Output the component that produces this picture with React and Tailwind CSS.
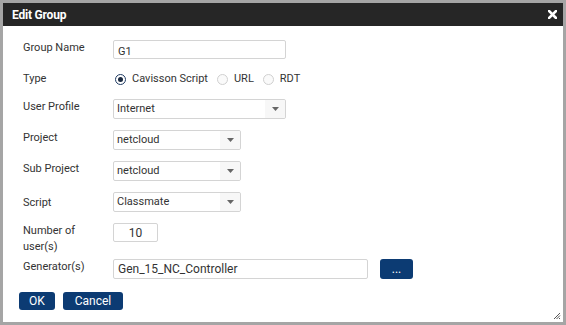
import React from 'react';

const Label = ({ children, className = '' }) => (
    <div className={`w-[90px] shrink-0 leading-[16px] ${className}`}>{children}</div>
);

const Select = ({ value, width }) => (
    <div className={`${width} h-[20px] flex items-center border border-[#d4d4d4] rounded-[2px] bg-white`}>
        <span className="flex-1 pl-[3px] leading-[18px] text-[#333]">{value}</span>
        <span className="w-[20px] h-full flex items-center justify-center bg-[#f7f7f7] rounded-r-[2px]">
            <svg width="7" height="4" viewBox="0 0 7 4">
                <path d="M0 0 H7 L3.5 4 Z" fill="#666" />
            </svg>
        </span>
    </div>
);

const Radio = ({ checked, label }) => (
    <label className="flex items-center mr-[9px]">
        <span
            className={`w-[11px] h-[11px] rounded-full border flex items-center justify-center ${
                checked ? 'border-[#1f3b63] bg-white' : 'border-[#d0d0d0] bg-[#fafafa]'
            }`}
        >
            {checked && <span className="w-[5px] h-[5px] rounded-full bg-[#1b2a40]" />}
        </span>
        <span className="ml-[6px]">{label}</span>
    </label>
);

const Button = ({ children, className = '' }) => (
    <button className={`h-[18px] bg-[#0c3b73] text-white rounded-[3px] text-[12px] leading-[18px] ${className}`}>
        {children}
    </button>
);

export default function App() {
    return (
        <div
            className="w-[566px] h-[325px] bg-[#a5a5a5] p-[3px] text-[11px] text-[#333]"
            style={{ fontFamily: 'Roboto, "Liberation Sans", sans-serif' }}
        >
            <div className="w-full h-full bg-white flex flex-col relative">
                {/* Title bar */}
                <div className="h-[23px] bg-[#262626] flex items-center justify-between pl-[9px] pr-[6px]">
                    <span className="text-white font-bold text-[12px] tracking-[-0.2px]">Edit Group</span>
                    <svg width="9" height="9" viewBox="0 0 9 9">
                        <path d="M1 1 L8 8 M8 1 L1 8" stroke="#fff" strokeWidth="2.6" strokeLinecap="square" />
                    </svg>
                </div>

                {/* Form */}
                <div className="flex flex-col pl-[20px] pt-[14px]">
                    <div className="flex items-start h-[19px]">
                        <Label>Group Name</Label>
                        <div className="w-[173px] h-[19px] border border-[#d4d4d4] rounded-[2px] pl-[4px] leading-[19px] pt-[1px]">
                            G1
                        </div>
                    </div>

                    <div className="flex items-center mt-[12px] h-[16px]">
                        <Label className="-mt-[1px]">Type</Label>
                        <div className="flex items-center ml-[2px]">
                            <Radio checked label="Cavisson Script" />
                            <Radio label="URL" />
                            <Radio label="RDT" />
                        </div>
                    </div>

                    <div className="flex items-start mt-[12px]">
                        <Label>User Profile</Label>
                        <Select value="Internet" width="w-[173px]" />
                    </div>

                    <div className="flex items-start mt-[11px]">
                        <Label>Project</Label>
                        <Select value="netcloud" width="w-[128px]" />
                    </div>

                    <div className="flex items-start mt-[11px]">
                        <Label>Sub Project</Label>
                        <Select value="netcloud" width="w-[128px]" />
                    </div>

                    <div className="flex items-start mt-[11px]">
                        <Label className="mt-[3px]">Script</Label>
                        <Select value="Classmate" width="w-[128px]" />
                    </div>

                    <div className="flex items-start mt-[11px] h-[19px]">
                        <Label className="leading-[12px]">
                            Number of
                            <br />
                            user(s)
                        </Label>
                        <div className="w-[45px] h-[19px] border border-[#d4d4d4] rounded-[2px] text-center leading-[18px] text-[12px]">
                            10
                        </div>
                    </div>

                    <div className="flex items-start mt-[17px]">
                        <Label>Generator(s)</Label>
                        <div className="w-[255px] h-[20px] border border-[#d4d4d4] rounded-[2px] pl-[4px] leading-[19px] text-[12px]">
                            Gen_15_NC_Controller
                        </div>
                        <Button className="w-[33px] h-[20px] ml-[12px] leading-[14px]">...</Button>
                    </div>

                    <div className="flex items-center gap-[8px] mt-[13px] -ml-[4px]">
                        <Button className="w-[36px]">OK</Button>
                        <Button className="w-[60px]">Cancel</Button>
                    </div>
                </div>

                {/* Resize grip */}
                <svg className="absolute right-[2px] bottom-[2px]" width="8" height="8" viewBox="0 0 8 8">
                    <path d="M7 1 L1 7 M7 3.5 L3.5 7 M7 6 L6 7" stroke="#555" strokeWidth="1" />
                </svg>
            </div>
        </div>
    );
}
